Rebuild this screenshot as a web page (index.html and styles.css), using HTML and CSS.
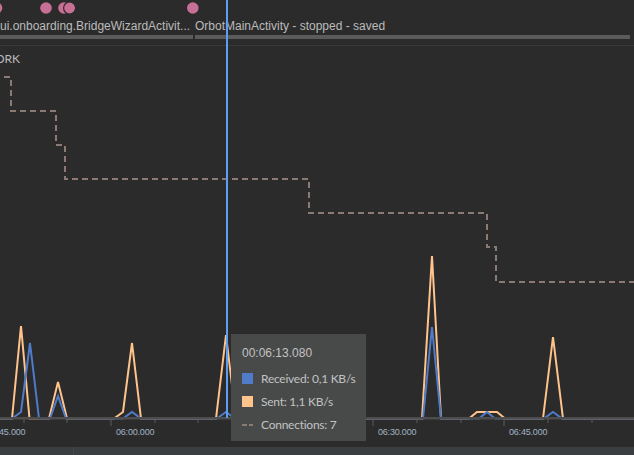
FILE: index.html
```html
<!DOCTYPE html>
<html lang="en">
<head>
<meta charset="utf-8">
<title>Network profiler</title>
<link rel="stylesheet" href="styles.css">
</head>
<body>
<div class="stage">
  <header class="timeline">
    <svg class="dots" width="634" height="17" viewBox="0 0 634 17">
      <circle class="dot" cx="-3.5" cy="8" r="5.8"/>
      <circle class="dot" cx="46" cy="8" r="5.8"/>
      <circle class="dot" cx="64" cy="8" r="5.8"/>
      <circle class="dot ring" cx="69.6" cy="8" r="6"/>
      <circle class="dot" cx="192.8" cy="8" r="5.8"/>
    </svg>
    <div class="activities">
      <div class="activity first">
        <span class="name">ui.onboarding.BridgeWizardActivit...</span>
        <span class="bar"></span>
      </div>
      <div class="activity second">
        <span class="name">OrbotMainActivity - stopped - saved</span>
        <span class="bar"></span>
      </div>
    </div>
  </header>

  <section class="chart">
    <div class="chart-title">ORK</div>
    <svg class="plot" width="634" height="401" viewBox="0 46 634 401">
      <path class="conn" d="M4 77H11V111H56V145H65V179H309V213H487V247H496V282H640"/>
      <polyline class="sent" points="-5,418.5 12,418.5 21,326 29.5,418.5 49,418.5 58,382 67,418.5 114,418.5 123,412 132,343 141,418.5 216,418.5 226,335 236,418.5 422,418.5 432,256 441,418.5 469,418.5 477,412 497,412 505,418.5 543,418.5 553,337 563,418.5 640,418.5"/>
      <polyline class="recv" points="-5,418.5 12,418.5 21,412 30,343 39,418.5 50,418.5 58,396 66,418.5 123,418.5 132,412 141,418.5 217,418.5 226,412 235,418.5 423,418.5 432,327 441,418.5 479,418.5 487,412 495,418.5 544,418.5 553,412 562,418.5 640,418.5"/>
      <rect class="axis" x="0" y="417" width="634" height="2.5"/>
      <path class="tick" d="M111 419V426M242 419V426M373 419V426M504 419V426M24 419V423M67 419V423M155 419V423M198 419V423M286 419V423M329 419V423M417 419V423M461 419V423M548 419V423M592 419V423"/>
      <text class="tick-label" x="-1" y="435">45.000</text>
      <text class="tick-label" x="116" y="435">06:00.000</text>
      <text class="tick-label" x="378" y="435">06:30.000</text>
      <text class="tick-label" x="509" y="435">06:45.000</text>
    </svg>
  </section>

  <footer class="statusbar"><span class="segment"></span></footer>

  <div class="cursor"></div>

  <div class="tooltip">
    <div class="tip-time">00:06:13.080</div>
    <div class="tip-row"><span class="swatch recv-swatch"></span><span class="tip-text">Received: 0,1 KB/s</span></div>
    <div class="tip-row"><span class="swatch sent-swatch"></span><span class="tip-text">Sent: 1,1 KB/s</span></div>
    <div class="tip-row"><span class="dash-swatch"><i></i><i></i></span><span class="tip-text">Connections: 7</span></div>
  </div>
</div>
</body>
</html>
```

FILE: styles.css
```css
html, body {
  margin: 0;
  padding: 0;
  background: #2b2b2b;
  overflow: hidden;
}

.stage {
  position: relative;
  width: 634px;
  height: 455px;
  overflow: hidden;
  font-family: "Liberation Sans", Arial, sans-serif;
  color: #bbbbbb;
}

/* ---------- activity timeline ---------- */
.timeline {
  height: 45px;
  border-bottom: 1px solid #3a3a3a;
  display: flex;
  flex-direction: column;
}

.dots {
  display: block;
  flex: none;
}

.dot {
  fill: #c76f95;
}

.dot.ring {
  stroke: #2b2b2b;
  stroke-width: 1.2;
}

.activities {
  display: flex;
  gap: 2px;
  padding-right: 4px;
}

.activity {
  display: flex;
  flex-direction: column;
  min-width: 0;
}

.activity.first {
  width: 193px;
  flex: none;
}

.activity.second {
  flex: 1;
}

.name {
  height: 18px;
  line-height: 18px;
  font-size: 12px;
  white-space: nowrap;
  overflow: hidden;
  color: #bbbbbb;
}

.bar {
  display: block;
  height: 4px;
  background: #5b5b5b;
}

/* ---------- chart ---------- */
.chart {
  position: relative;
  height: 401px;
}

.chart-title {
  position: absolute;
  top: 5px;
  left: -5px;
  font-family: Lato, "Liberation Sans", sans-serif;
  font-size: 12px;
  line-height: 16px;
  color: #bbbbbb;
}

.plot {
  display: block;
}

.conn {
  fill: none;
  stroke: #8a7a73;
  stroke-width: 2;
  stroke-dasharray: 6 4;
}

.sent {
  fill: none;
  stroke: #ffc48c;
  stroke-width: 2;
}

.recv {
  fill: none;
  stroke: #4f7bc8;
  stroke-width: 2;
}

.axis {
  fill: #4d4d4d;
}

.tick {
  stroke: #5c5c5c;
  stroke-width: 1;
  fill: none;
}

.tick-label {
  font-family: "Liberation Sans", Arial, sans-serif;
  font-size: 9px;
  letter-spacing: -0.2px;
  fill: #a3b3c6;
}

/* ---------- status bar ---------- */
.statusbar {
  height: 8px;
  background: #3b3e40;
  display: flex;
}

.segment {
  width: 73px;
  border-right: 1px solid #45484a;
}

/* ---------- overlays ---------- */
.cursor {
  position: absolute;
  left: 226px;
  top: 0;
  width: 2px;
  height: 418px;
  background: #5e9ef2;
}

.tooltip {
  position: absolute;
  left: 231px;
  top: 334px;
  width: 135px;
  height: 107px;
  box-sizing: border-box;
  padding: 11px 8px 5px 11px;
  background: #484a4a;
  font-family: Lato, "Liberation Sans", sans-serif;
  font-size: 12px;
  color: #c2c2c2;
}

.tip-time {
  height: 16px;
  line-height: 16px;
  margin-bottom: 6px;
  font-family: "Liberation Sans", Arial, sans-serif;
}

.tip-row {
  height: 23px;
  display: flex;
  align-items: center;
  gap: 8px;
}

.swatch {
  width: 11px;
  height: 11px;
  flex: none;
}

.recv-swatch {
  background: #4f7bc8;
}

.sent-swatch {
  background: #ffc48c;
}

.dash-swatch {
  width: 11px;
  height: 2px;
  flex: none;
  display: flex;
  gap: 2px;
}

.dash-swatch i {
  flex: 1;
  background: #8a7a73;
}

.tip-text {
  white-space: nowrap;
  letter-spacing: -0.25px;
}
```
